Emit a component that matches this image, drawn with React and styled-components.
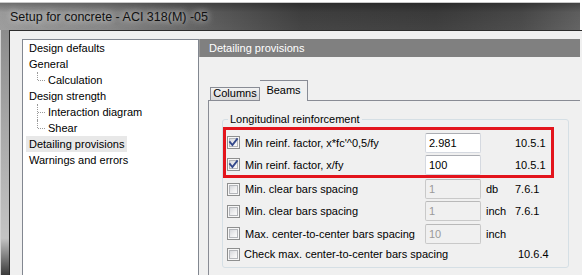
import React from 'react';
import styled, { createGlobalStyle } from 'styled-components';

const GlobalStyle = createGlobalStyle`
  html, body {
    margin: 0;
    padding: 0;
    background: #fff;
    overflow: hidden;
  }
  body {
    font-family: "Liberation Sans", Arial, sans-serif;
    font-size: 11px;
    color: #000;
  }
`;

const treeItems = [
    { label: 'Design defaults' },
    { label: 'General' },
    { label: 'Calculation', child: true, last: true },
    { label: 'Design strength' },
    { label: 'Interaction diagram', child: true },
    { label: 'Shear', child: true, last: true },
    { label: 'Detailing provisions', selected: true },
    { label: 'Warnings and errors' },
];

function CheckBox({ checked }) {
    return (
        <Box>
            <BoxInner />
            {checked && (
                <CheckMark viewBox="0 0 13 13">
                    <path d="M3 6.2 L5.4 9 L10 3.2" fill="none" stroke="#34498c" strokeWidth="1.9" strokeLinecap="square" />
                </CheckMark>
            )}
        </Box>
    );
}

function OptionRow({ h, inset, checked, label, value, disabled, unit, code, wide }) {
    return (
        <Row $h={h} $inset={inset}>
            <CheckBox checked={checked} />
            {wide ? (
                <>
                    <WideLabel>{label}</WideLabel>
                    <Code $shift={3}>{code}</Code>
                </>
            ) : (
                <>
                    <span>{label}</span>
                    <Field defaultValue={value} readOnly $disabled={disabled} />
                    <span>{unit}</span>
                    <Code>{code}</Code>
                </>
            )}
        </Row>
    );
}

function App() {
    return (
        <>
            <GlobalStyle />
            <Window>
                <TitleBar>
                    <TitleText>Setup for concrete - ACI 318(M) -05</TitleText>
                </TitleBar>
                <Frame />
                <Client>
                    <Tree>
                        {treeItems.map((item) => (
                            <TreeItem key={item.label} $child={item.child} $last={item.last}>
                                <TreeLabel $selected={item.selected}>{item.label}</TreeLabel>
                            </TreeItem>
                        ))}
                    </Tree>

                    <RightPanel>
                        <Header>Detailing provisions</Header>
                        <TabArea>
                            <TabStrip>
                                <Tab $w={50}>Columns</Tab>
                                <Tab $w={48} $active>Beams</Tab>
                            </TabStrip>
                            <TabPage>
                                <Group>
                                    <Legend>Longitudinal reinforcement</Legend>
                                    <Highlight>
                                        <OptionRow h={23} inset={1} checked label="Min reinf. factor, x*fc'^0,5/fy" value="2.981" code="10.5.1" />
                                        <OptionRow h={21} inset={1} checked label="Min reinf. factor, x/fy" value="100" code="10.5.1" />
                                    </Highlight>
                                    <OptionRow h={22} inset={4} label="Min. clear bars spacing" value="1" disabled unit="db" code="7.6.1" />
                                    <OptionRow h={22} inset={4} label="Min. clear bars spacing" value="1" disabled unit="inch" code="7.6.1" />
                                    <OptionRow h={23} inset={4} label="Max. center-to-center bars spacing" value="10" disabled unit="inch" />
                                    <OptionRow h={18} inset={4} wide label="Check max. center-to-center bars spacing" code="10.6.4" />
                                </Group>
                            </TabPage>
                        </TabArea>
                    </RightPanel>
                </Client>
            </Window>
        </>
    );
}

export default App;

const Window = styled.div`
    width: 582px;
    height: 275px;
    overflow: hidden;
    padding-top: 2px;
    box-sizing: border-box;
    display: grid;
    grid-template-columns: 9px 1fr;
    grid-template-rows: 28px 1fr;
`;

const TitleBar = styled.div`
    grid-column: 1 / -1;
    margin-right: 2px;
    border-top: 1px solid #c9c9c9;
    display: flex;
    align-items: center;
    padding-left: 10px;
    background:
        linear-gradient(to bottom, rgba(0, 0, 0, 0.28), rgba(0, 0, 0, 0) 35%, rgba(255, 255, 255, 0.04)),
        linear-gradient(to right, #9a9a9a 0%, #848484 18%, #5a5a5a 36%, #3e3e3e 52%, #3a3a3a 75%, #474747 90%, #5e5e5e 100%);
`;

const TitleText = styled.span`
    font-size: 12.5px;
    color: #111;
    text-shadow: 0 0 6px rgba(225, 225, 225, 0.9), 0 0 10px rgba(200, 200, 200, 0.7);
`;

const Frame = styled.div`
    background: linear-gradient(to bottom, #8c8c8c 0%, #a8a8a8 40%, #c4c4c4 85%, #3a3a3a 100%);
    border-left: 1px solid #d2d2d2;
    box-sizing: border-box;
`;

const Client = styled.div`
    border-left: 1px solid #2c2c2c;
    border-top: 1px solid #2c2c2c;
    background: #f0f0f0;
    padding: 8px 2px 0 12px;
    display: flex;
    min-height: 0;
    overflow: hidden;
`;

const Tree = styled.div`
    width: 177px;
    flex-shrink: 0;
    box-sizing: border-box;
    background: #fff;
    border: 1px solid #828790;
    border-bottom: none;
`;

const TreeItem = styled.div`
    position: relative;
    height: 16px;
    line-height: 16px;
    padding-left: ${(p) => (p.$child ? 22 : 3)}px;

    ${(p) =>
        p.$child &&
        `
        &::before {
            content: '';
            position: absolute;
            left: 14px;
            top: 0;
            height: ${p.$last ? '8px' : '16px'};
            border-left: 1px dotted #9a9a9a;
        }
        &::after {
            content: '';
            position: absolute;
            left: 15px;
            top: 8px;
            width: 7px;
            border-top: 1px dotted #9a9a9a;
        }
    `}
`;

const TreeLabel = styled.span`
    display: inline-block;
    padding: 0 3px;
    background: ${(p) => (p.$selected ? '#e8e8e8' : 'transparent')};
    white-space: nowrap;
`;

const RightPanel = styled.div`
    flex: 1;
    display: flex;
    flex-direction: column;
    min-width: 0;
`;

const Header = styled.div`
    height: 18px;
    line-height: 18px;
    background: #808080;
    color: #fff;
    padding-left: 9px;
    border-left: 1px solid #9a9a9a;
`;

const TabArea = styled.div`
    flex: 1;
    display: flex;
    flex-direction: column;
    padding: 23px 0 0 9px;
`;

const TabStrip = styled.div`
    display: flex;
    align-items: flex-end;
    height: 21px;
    margin: 0 0 -1px 2px;
    position: relative;
    z-index: 1;
`;

const Tab = styled.div`
    width: ${(p) => p.$w}px;
    box-sizing: border-box;
    height: ${(p) => (p.$active ? 21 : 13)}px;
    margin-bottom: ${(p) => (p.$active ? 0 : 1)}px;
    border: 1px solid #898c95;
    border-bottom: none;
    border-left: ${(p) => (p.$active ? 'none' : '1px solid #898c95')};
    background: ${(p) => (p.$active ? '#f0f0f0' : 'linear-gradient(to bottom, #f3f3f3, #e3e3e3 50%, #d9d9d9)')};
    display: flex;
    align-items: ${(p) => (p.$active ? 'center' : 'flex-end')};
    justify-content: center;
    line-height: 13px;
    padding-bottom: ${(p) => (p.$active ? 1 : 0)}px;
`;

const TabPage = styled.div`
    flex: 1;
    border-top: 1px solid #898c95;
    border-left: 1px solid #898c95;
    background: #f0f0f0;
    padding: 12px 0 0 13px;
`;

const Group = styled.fieldset`
    width: 347px;
    box-sizing: border-box;
    margin: 0;
    padding: 0 0 4px 0;
    border: 1px solid #d5dfe5;
    border-radius: 3px;
    min-width: 0;
`;

const Legend = styled.legend`
    margin-left: 5px;
    padding: 0 2px;
    line-height: 13px;
    font-size: 11px;
`;

const Highlight = styled.div`
    width: 331px;
    box-sizing: border-box;
    margin-top: 1px;
    padding-top: 1px;
    border: 3px solid #e3141c;
`;

const Row = styled.div`
    display: grid;
    grid-template-columns: 18px 180px 61px 29px auto;
    align-items: center;
    height: ${(p) => p.$h}px;
    padding-left: ${(p) => p.$inset}px;
    white-space: nowrap;
`;

const Box = styled.span`
    position: relative;
    width: 13px;
    height: 13px;
    box-sizing: border-box;
    border: 1px solid #8e8f8f;
    background: #f7f7f7;
    padding: 1px;
    display: block;
`;

const BoxInner = styled.span`
    display: block;
    width: 9px;
    height: 9px;
    box-sizing: border-box;
    border: 1px solid #b4b6ba;
    background: linear-gradient(135deg, #d6d8dc 0%, #eeeeef 55%, #fbfbfb 100%);
`;

const CheckMark = styled.svg`
    position: absolute;
    left: -1px;
    top: -1px;
    width: 13px;
    height: 13px;
`;

const WideLabel = styled.span`
    grid-column: 2 / span 3;
    margin-left: -1px;
`;

const Field = styled.input`
    width: 56px;
    height: 20px;
    box-sizing: border-box;
    margin: 0;
    padding: 0 3px;
    font-family: "Liberation Sans", Arial, sans-serif;
    font-size: 11px;
    border: 1px solid ${(p) => (p.$disabled ? '#c9c9c9' : '#d5d9e0')};
    border-top-color: ${(p) => (p.$disabled ? '#b9b9b9' : '#abadb3')};
    border-radius: 2px;
    background: ${(p) => (p.$disabled ? '#f0f0f0' : '#fff')};
    color: ${(p) => (p.$disabled ? '#9a9a9a' : '#000')};
    outline: none;
`;

const Code = styled.span`
    padding-left: ${(p) => p.$shift || 0}px;
`;
